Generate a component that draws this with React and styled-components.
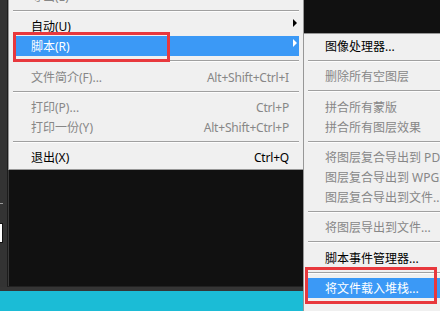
import React from 'react';
import styled, { createGlobalStyle } from 'styled-components';

const mainItems = [
    { label: '导出(E)', disabled: true },
    { sep: true },
    { label: '自动(U)', arrow: true },
    { label: '脚本(R)', arrow: true, active: true },
    { sep: true },
    { label: '文件简介(F)...', shortcut: 'Alt+Shift+Ctrl+I', disabled: true },
    { sep: true },
    { label: '打印(P)...', shortcut: 'Ctrl+P', disabled: true },
    { label: '打印一份(Y)', shortcut: 'Alt+Shift+Ctrl+P', disabled: true },
    { sep: true },
    { label: '退出(X)', shortcut: 'Ctrl+Q' },
];

const subItems = [
    { label: '图像处理器...' },
    { sep: true },
    { label: '删除所有空图层', disabled: true },
    { sep: true },
    { label: '拼合所有蒙版', disabled: true },
    { label: '拼合所有图层效果', disabled: true },
    { sep: true },
    { label: '将图层复合导出到 PDF...', disabled: true },
    { label: '图层复合导出到 WPG...', disabled: true },
    { label: '图层复合导出到文件...', disabled: true },
    { sep: true },
    { label: '将图层导出到文件...', disabled: true },
    { sep: true },
    { label: '脚本事件管理器...' },
    { sep: true },
    { label: '将文件载入堆栈...', active: true },
];

const MenuList = ({ items, inset }) => (
    <>
        {items.map((item, i) =>
            item.sep ? (
                <Separator key={i} />
            ) : (
                <Item key={i} $active={item.active} $disabled={item.disabled} $inset={inset}>
                    <Label>{item.label}</Label>
                    <Shortcut>{item.shortcut}</Shortcut>
                    <ArrowCell>{item.arrow && <Arrow $active={item.active} />}</ArrowCell>
                </Item>
            )
        )}
    </>
);

const App = () => {
    return (
        <Screen>
            <GlobalStyle />
            <Workspace>
                <SidePanel>
                    <Tick />
                    <InputStub />
                </SidePanel>
                <Canvas />
            </Workspace>
            <Taskbar />

            <MainMenu>
                <MenuList items={mainItems} inset={18} />
            </MainMenu>
            <SubMenu>
                <MenuList items={subItems} inset={17} />
            </SubMenu>

            <Callout $x={13} $y={32} $w={157} $h={30} />
            <Callout $x={305} $y={267} $w={132} $h={37} />
        </Screen>
    );
};

const GlobalStyle = createGlobalStyle`
html, body {
    margin: 0;
    padding: 0;
    background: #333;
    overflow: hidden;
}
`;

const Screen = styled.div`
position: relative;
width: 440px;
height: 311px;
overflow: hidden;
display: flex;
flex-direction: column;
background: #333;
font-family: "Noto Sans", "Noto Sans CJK SC", sans-serif;
font-size: 12px;
`;

const Workspace = styled.div`
flex: 1;
display: flex;
padding-bottom: 4px;
background: #353535;
`;

const SidePanel = styled.div`
width: 7px;
display: flex;
flex-direction: column;
background: #333;
`;

const Tick = styled.div`
margin-top: 203px;
width: 3px;
height: 1px;
background: #9a9a9a;
`;

const InputStub = styled.div`
margin-top: 19px;
width: 2px;
height: 18px;
background: #fff;
border: 1px solid #111;
border-left: none;
`;

const Canvas = styled.div`
flex: 1;
background: #111;
border-left: 1px solid #1c1c1c;
box-shadow: inset 1px 0 #3a3a3a;
border-bottom: 1px solid #222;
`;

const Taskbar = styled.div`
height: 20px;
background: #1bbcd6;
`;

const Menu = styled.div`
position: absolute;
background: #f0f0f0;
border: 1px solid #979797;
padding: 2px 0;
`;

const MainMenu = styled(Menu)`
left: 8px;
top: -17px;
width: 294px;
`;

const SubMenu = styled(Menu)`
left: 303px;
top: 33px;
width: 140px;
height: 300px;
border-right: none;
`;

const Item = styled.div`
box-sizing: border-box;
height: 20px;
margin: 0 4px;
padding: 2px 0 0 ${p => p.$inset}px;
display: grid;
grid-template-columns: 1fr auto 10px;
align-items: center;
white-space: nowrap;
line-height: 18px;
background: ${p => (p.$active ? '#3b99f6' : 'transparent')};
color: ${p => (p.$active ? '#fff' : p.$disabled ? '#878787' : '#000')};
`;

const Label = styled.span`
overflow: visible;
`;

const Shortcut = styled.span`
text-align: right;
letter-spacing: -0.2px;
`;

const ArrowCell = styled.span`
display: flex;
justify-content: center;
align-items: center;
height: 18px;
padding-bottom: 8px;
box-sizing: border-box;
`;

const Arrow = styled.span`
width: 0;
height: 0;
border-top: 4px solid transparent;
border-bottom: 4px solid transparent;
border-left: 4px solid ${p => (p.$active ? '#fff' : '#000')};
margin-left: 2px;
`;

const Separator = styled.div`
height: 10.33px;
margin: 0 4px;
display: flex;
flex-direction: column;
justify-content: center;
&::before {
    content: '';
    display: block;
    height: 1px;
    background: #a0a0a0;
}
&::after {
    content: '';
    display: block;
    height: 1px;
    background: #fdfdfd;
}
`;

const Callout = styled.div`
position: absolute;
left: ${p => p.$x}px;
top: ${p => p.$y}px;
width: ${p => p.$w}px;
height: ${p => p.$h}px;
box-sizing: border-box;
border: 3px solid #e8383d;
`;

export default App;
